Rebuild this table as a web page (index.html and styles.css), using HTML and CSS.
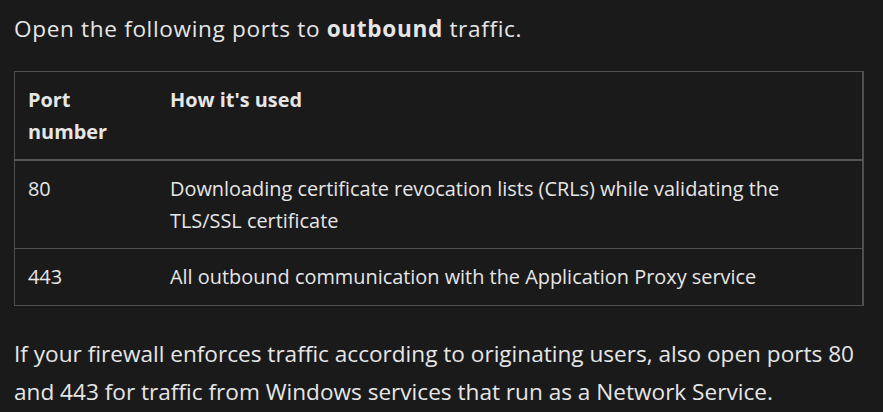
FILE: index.html
```html
<!DOCTYPE html>
<html lang="en">
<head>
<meta charset="utf-8">
<link rel="stylesheet" href="styles.css">
</head>
<body>
<main class="content">
  <p class="para lead">Open the following ports to <strong>outbound</strong> traffic.</p>
  <table class="ports">
    <thead>
      <tr><th class="col-port">Port number</th><th>How it's used</th></tr>
    </thead>
    <tbody>
      <tr><td>80</td><td>Downloading certificate revocation lists (CRLs) while validating the TLS/SSL certificate</td></tr>
      <tr><td>443</td><td>All outbound communication with the Application Proxy service</td></tr>
    </tbody>
  </table>
  <p class="para tail">If your firewall enforces traffic according to originating users, also open ports 80 and 443 for traffic from Windows services that run as a Network Service.</p>
</main>
</body>
</html>
```
FILE: styles.css
```css
html, body {
  margin: 0;
  padding: 0;
  background: #1a1a1a;
}
body {
  color: #e6e6e6;
  font-family: "Open Sans", "Lato", sans-serif;
}
.content {
  padding: 10px 19px 0 14px;
}
.para {
  margin: 0;
  font-size: 22.6px;
  line-height: 38px;
}
.lead {
  margin-bottom: 23px;
  letter-spacing: 0.65px;
}
.tail {
  margin-top: 29px;
}
.para strong {
  font-weight: 700;
}
.ports {
  width: 850px;
  border-collapse: collapse;
  font-size: 19.9px;
  line-height: 32px;
  border: 1px solid #4f4f4f;
  border-right-width: 2px;
}
.ports th, .ports td {
  text-align: left;
  vertical-align: top;
  padding: 11.5px 13px;
}
.ports th {
  font-weight: 700;
}
.ports thead tr {
  border-bottom: 2px solid #555;
}
.ports tbody tr {
  border-bottom: 1px solid #4f4f4f;
}
.ports tbody tr:last-child td {
  padding-bottom: 12.5px;
}
.col-port {
  width: 116px;
}
```
